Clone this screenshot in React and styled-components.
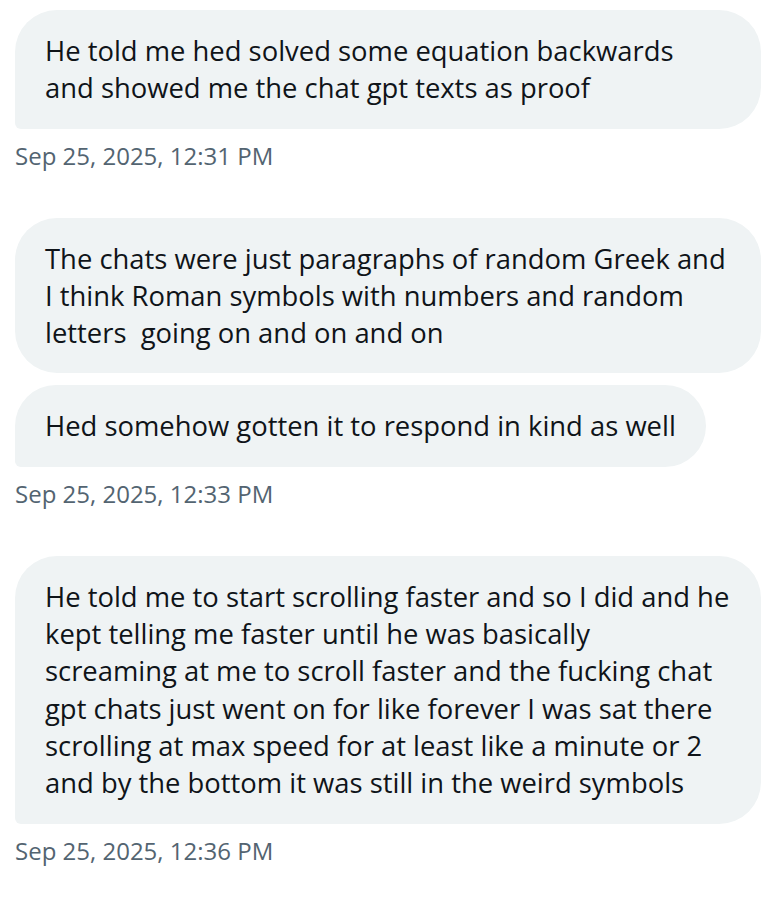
import React from "react";
import styled, { createGlobalStyle } from "styled-components";

const ink = "#0f1419";
const muted = "#536471";
const bubbleBg = "#eff3f4";

const Global = createGlobalStyle`
  html, body {
    margin: 0;
    padding: 0;
    background: #ffffff;
  }
`;

const Thread = styled.div`
  width: 746px;
  padding: 10px 11px 0 15px;
  display: flex;
  flex-direction: column;
  font-family: "Open Sans", "Noto Sans", sans-serif;
`;

const Group = styled.div`
  display: flex;
  flex-direction: column;
  align-items: flex-start;
  gap: 12px;
  margin-bottom: 48px;
`;

const Bubble = styled.div`
  box-sizing: border-box;
  width: ${(p) => (p.$full ? "100%" : "fit-content")};
  max-width: 100%;
  padding: 22px 30px;
  background: ${bubbleBg};
  border-radius: 42px;
  border-bottom-left-radius: ${(p) => (p.$last ? "6px" : "42px")};
  color: ${ink};
  font-size: 27.4px;
  line-height: 37.3px;
`;

const Line = styled.span`
  display: block;
  white-space: pre;
`;

const Stamp = styled.div`
  margin-top: 1px;
  color: ${muted};
  font-size: 24px;
  line-height: 28px;
`;

const groups = [
  {
    time: "Sep 25, 2025, 12:31 PM",
    messages: [
      {
        full: true,
        lines: [
          "He told me hed solved some equation backwards",
          "and showed me the chat gpt texts as proof",
        ],
      },
    ],
  },
  {
    time: "Sep 25, 2025, 12:33 PM",
    messages: [
      {
        full: true,
        lines: [
          "The chats were just paragraphs of random Greek and",
          "I think Roman symbols with numbers and random",
          "letters  going on and on and on",
        ],
      },
      {
        full: false,
        lines: ["Hed somehow gotten it to respond in kind as well"],
      },
    ],
  },
  {
    time: "Sep 25, 2025, 12:36 PM",
    messages: [
      {
        full: true,
        lines: [
          "He told me to start scrolling faster and so I did and he",
          "kept telling me faster until he was basically",
          "screaming at me to scroll faster and the fucking chat",
          "gpt chats just went on for like forever I was sat there",
          "scrolling at max speed for at least like a minute or 2",
          "and by the bottom it was still in the weird symbols",
        ],
      },
    ],
  },
];

export default function App() {
  return (
    <>
      <Global />
      <Thread>
        {groups.map((g) => (
          <Group key={g.time}>
            {g.messages.map((m, i) => (
              <Bubble key={i} $full={m.full} $last={i === g.messages.length - 1}>
                {m.lines.map((l) => (
                  <Line key={l}>{l}</Line>
                ))}
              </Bubble>
            ))}
            <Stamp>{g.time}</Stamp>
          </Group>
        ))}
      </Thread>
    </>
  );
}
